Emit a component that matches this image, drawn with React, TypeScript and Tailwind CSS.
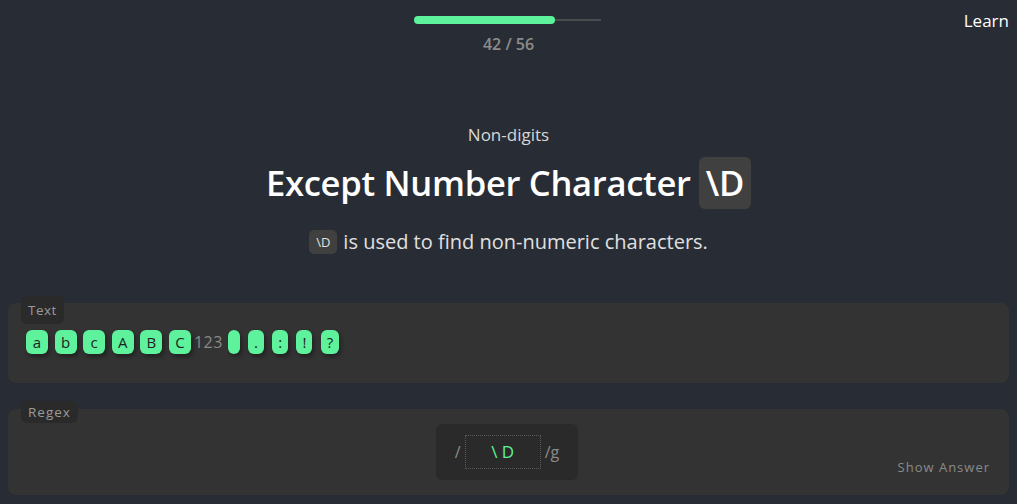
const chars = ["a", "b", "c", "A", "B", "C"]
const symbols = [".", ":", "!", "?"]

const Chip = ({ c, className = "" }: { c: string; className?: string }) => (
    <span className={`h-[24px] inline-flex items-center justify-center rounded-[6px] bg-[#5df29b] text-[#1d1f24] text-[15px] shadow-[2px_3px_4px_rgba(0,0,0,.35)] ${className}`}>
        {c}
    </span>
)

export default function App() {
    return (
        <div className="w-[1017px] h-[504px] overflow-hidden bg-[#282c34] text-white font-['Open_Sans','Noto_Sans',sans-serif]">
            <div className="relative h-[62px] flex flex-col items-center">
                <div className="mt-[17px] ml-[-2px] w-[187px] h-[6px] flex items-center">
                    <div className="relative w-full h-[2px] bg-[#4a4b4e]">
                        <div className="absolute left-0 top-[-3px] h-[8px] w-[141px] rounded-full bg-[#5df29b]" />
                    </div>
                </div>
                <div className="mt-[10px] text-[16px] font-semibold text-[#8c8c8c] leading-[22px]">42 / 56</div>
                <div className="absolute right-[8px] top-[8px] text-[17px] leading-[26px]">Learn</div>
            </div>

            <div className="mt-[61px] flex flex-col items-center">
                <div className="text-[17px] leading-[24px] text-[#d6d6d6]">Non-digits</div>
                <h1 className="mt-[10px] flex items-center gap-[8px] text-[34.6px] font-semibold leading-[52px] tracking-[-0.3px]">
                    Except Number Character
                    <span className="px-[7px] h-[52px] inline-flex items-center rounded-[6px] bg-[#404040]">\D</span>
                </h1>
                <p className="mt-[20px] flex items-center gap-[6px] text-[20px] leading-[26px] text-[#e0e0e0]">
                    <code className="h-[24px] px-[7px] inline-flex items-center rounded-[5px] bg-[#404040] text-[13px] font-['Open_Sans',sans-serif]">\D</code>
                    is used to find non-numeric characters.
                </p>
            </div>

            <div className="mt-[48px] px-[8px] flex flex-col gap-[26px]">
                <div className="relative h-[80px] rounded-[8px] bg-[#333333] px-[18px] pt-[27px]">
                    <span className="absolute left-[13px] top-[-7px] h-[28px] px-[7px] flex items-center rounded-[6px] bg-[#2a2a2a] text-[13.5px] text-[#9a9a9a] tracking-[0.5px]">Text</span>
                    <div className="flex items-center">
                        <div className="flex gap-[6.6px]">
                            {chars.map((c, i) => <Chip key={i} c={c} className="w-[22px]" />)}
                        </div>
                        <span className="ml-[3px] text-[16px] text-[#8a8a8a] tracking-[0.5px]">123</span>
                        <Chip c="" className="ml-[5px] w-[12px]" />
                        <div className="ml-[8px] flex gap-[8.3px]">
                            {symbols.map((c, i) => <Chip key={i} c={c} className="px-[6px]" />)}
                        </div>
                    </div>
                </div>

                <div className="relative h-[86px] rounded-[8px] bg-[#333333] flex justify-center pt-[15px]">
                    <span className="absolute left-[13px] top-[-8px] h-[22px] px-[7px] flex items-center rounded-[6px] bg-[#2a2a2a] text-[13.5px] text-[#9a9a9a] tracking-[1px]">Regex</span>
                    <div className="ml-[-3px] h-[56px] px-[19px] flex items-center gap-[4px] rounded-[6px] bg-[#2a2a2a] text-[16px] text-[#8a8a8a]">
                        <span>/</span>
                        <span className="w-[76px] h-[34px] flex items-center justify-center border border-dotted border-[#5a5a5a] text-[#5df29b] text-[17px]">\ D</span>
                        <span>/g</span>
                    </div>
                    <span className="absolute right-[19px] bottom-[18px] text-[13px] text-[#8a8a8a] tracking-[1px]">Show Answer</span>
                </div>
            </div>
        </div>
    )
}
